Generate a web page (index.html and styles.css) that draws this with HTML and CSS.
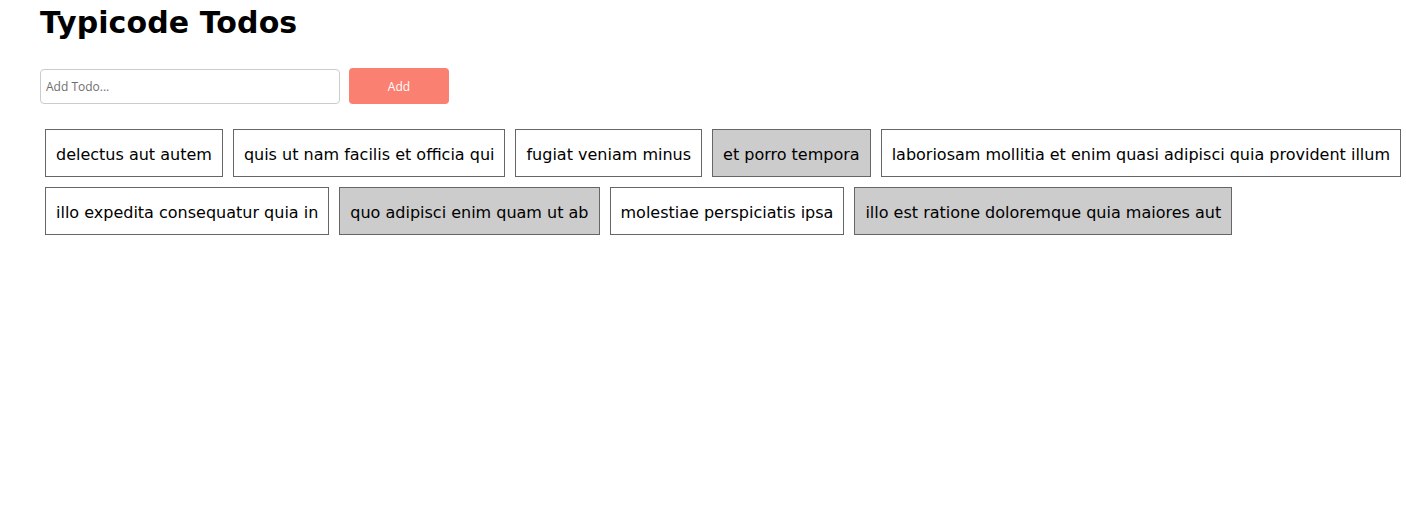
FILE: index.html
```html
<!DOCTYPE html>
<html lang="en">
<head>
<meta charset="utf-8">
<title>Typicode Todos</title>
<link rel="stylesheet" href="styles.css">
</head>
<body>
<div class="app">
  <h1 class="title">Typicode Todos</h1>
  <form class="todo-form">
    <input class="todo-input" type="text" placeholder="Add Todo...">
    <button class="todo-btn" type="button">Add</button>
  </form>
  <div class="todo-list">
    <div class="todo">delectus aut autem</div>
    <div class="todo">quis ut nam facilis et officia qui</div>
    <div class="todo">fugiat veniam minus</div>
    <div class="todo done">et porro tempora</div>
    <div class="todo">laboriosam mollitia et enim quasi adipisci quia provident illum</div>
    <div class="todo">illo expedita consequatur quia in</div>
    <div class="todo done">quo adipisci enim quam ut ab</div>
    <div class="todo">molestiae perspiciatis ipsa</div>
    <div class="todo done">illo est ratione doloremque quia maiores aut</div>
  </div>
</div>
</body>
</html>
```
FILE: styles.css
```css
* { box-sizing: border-box; }
body {
  margin: 0;
  background: #fff;
  color: #000;
  font-family: "DejaVu Sans", sans-serif;
}
.app {
  padding: 0 0 0 40px;
}
.title {
  margin: 0 0 22px;
  font-family: "DejaVu Sans", sans-serif;
  font-weight: bold;
  font-size: 30px;
  line-height: 46px;
  letter-spacing: 0.1px;
}
.todo-form {
  display: flex;
  align-items: center;
  gap: 9px;
}
.todo-input {
  width: 300px;
  height: 35px;
  margin: 1px 0 0;
  padding: 0 5px;
  border: 1px solid #ccc;
  border-radius: 4px;
  font-family: "Open Sans", sans-serif;
  font-size: 12px;
  color: #333;
  outline: none;
}
.todo-input::placeholder { color: #6f6f6f; }
.todo-btn {
  width: 100px;
  height: 36px;
  border: none;
  border-radius: 4px;
  background: #fa8072;
  color: #fff;
  font-family: "Open Sans", sans-serif;
  font-size: 12px;
  cursor: pointer;
}
.todo-list {
  display: flex;
  flex-wrap: wrap;
  margin-top: 20px;
}
.todo {
  margin: 5px;
  padding: 13px 10px 9px;
  border: 1px solid #666;
  font-size: 16px;
  line-height: 24px;
  background: #fff;
  white-space: nowrap;
}
.todo.done {
  background: #ccc;
}
```
